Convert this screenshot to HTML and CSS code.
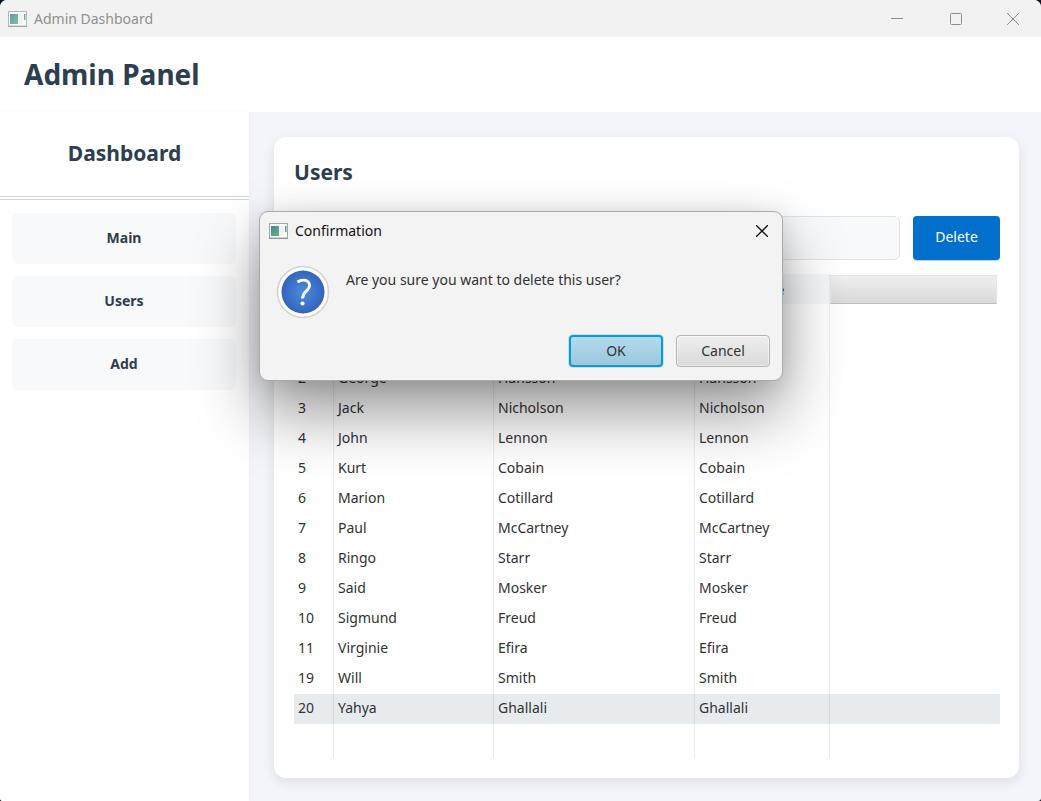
FILE: index.html
```html
<!DOCTYPE html>
<html lang="en">
<head>
<meta charset="utf-8">
<title>Admin Dashboard</title>
<link rel="stylesheet" href="styles.css">
</head>
<body>
<svg width="0" height="0" class="defs" aria-hidden="true">
  <defs>
    <linearGradient id="pane" x1="0" y1="0" x2="1" y2="1"><stop offset="0" stop-color="#4a7fa8"/><stop offset="1" stop-color="#5fb87c"/></linearGradient>
    <symbol id="app-icon" viewBox="0 0 19 16">
      <rect x="0.5" y="0.5" width="18" height="14.500" fill="#fff" stroke="#a3a8b0"/>
      <path d="M0 15.500H19" stroke="#8f949c"/>
      <rect x="2" y="3" width="8" height="10" fill="url(#pane)"/>
      <rect x="11" y="3" width="4" height="10" fill="#f0f1f2"/>
      <rect x="16" y="3" width="1.500" height="6" fill="url(#pane)"/>
    </symbol>
  </defs>
</svg>
<div class="window">
  <div class="titlebar">
    <svg class="app-icon muted" width="19" height="16" aria-hidden="true"><use href="#app-icon"/></svg>
    <span class="titlebar-text">Admin Dashboard</span>
    <button class="caption" aria-label="Minimize"><svg width="12" height="12"><path d="M0 5.500H12"/></svg></button>
    <button class="caption" aria-label="Maximize"><svg width="12" height="12"><rect x=".5" y=".5" width="11" height="11" rx="1"/></svg></button>
    <button class="caption" aria-label="Close"><svg width="12" height="12"><path d="M0 0L12 12M12 0L0 12"/></svg></button>
  </div>
  <header class="header"><h1>Admin Panel</h1></header>
  <div class="body">
    <aside class="sidebar">
      <h2 class="sidebar-title">Dashboard</h2>
      <nav class="nav">
        <button>Main</button>
        <button>Users</button>
        <button>Add</button>
      </nav>
    </aside>
    <main class="main">
      <section class="card">
        <h2>Users</h2>
        <div class="toolbar">
          <input class="search" type="text" aria-label="Search users">
          <button class="delete">Delete</button>
        </div>
        <table class="users">
          <colgroup><col class="c-id"><col class="c-first"><col class="c-last"><col class="c-name"><col></colgroup>
          <thead><tr><th></th><th></th><th></th><th>Name</th><th class="rest"><div></div></th></tr></thead>
          <tbody>
            <tr><td></td><td></td><td></td><td></td><td></td></tr>
            <tr><td></td><td></td><td></td><td></td><td></td></tr>
            <tr><td>2</td><td>George</td><td>Hansson</td><td>Hansson</td><td></td></tr>
            <tr><td>3</td><td>Jack</td><td>Nicholson</td><td>Nicholson</td><td></td></tr>
            <tr><td>4</td><td>John</td><td>Lennon</td><td>Lennon</td><td></td></tr>
            <tr><td>5</td><td>Kurt</td><td>Cobain</td><td>Cobain</td><td></td></tr>
            <tr><td>6</td><td>Marion</td><td>Cotillard</td><td>Cotillard</td><td></td></tr>
            <tr><td>7</td><td>Paul</td><td>McCartney</td><td>McCartney</td><td></td></tr>
            <tr><td>8</td><td>Ringo</td><td>Starr</td><td>Starr</td><td></td></tr>
            <tr><td>9</td><td>Said</td><td>Mosker</td><td>Mosker</td><td></td></tr>
            <tr><td>10</td><td>Sigmund</td><td>Freud</td><td>Freud</td><td></td></tr>
            <tr><td>11</td><td>Virginie</td><td>Efira</td><td>Efira</td><td></td></tr>
            <tr><td>19</td><td>Will</td><td>Smith</td><td>Smith</td><td></td></tr>
            <tr class="selected"><td>20</td><td>Yahya</td><td>Ghallali</td><td>Ghallali</td><td></td></tr>
            <tr class="filler"><td></td><td></td><td></td><td></td><td></td></tr>
          </tbody>
        </table>
      </section>
    </main>
  </div>
</div>
<dialog class="dialog" open aria-labelledby="dlg-title">
  <div class="dialog-bar">
    <svg class="app-icon" width="19" height="16" aria-hidden="true"><use href="#app-icon"/></svg>
    <span id="dlg-title">Confirmation</span>
    <button class="dialog-close" aria-label="Close"><svg width="12" height="12"><path d="M0 0L12 12M12 0L0 12"/></svg></button>
  </div>
  <div class="dialog-content">
    <svg class="question" width="54" height="54" viewBox="0 0 54 54" aria-hidden="true">
      <defs><radialGradient id="ball" cy=".5"><stop offset="0" stop-color="#4a8ddd"/><stop offset="1" stop-color="#3464bd"/></radialGradient></defs>
      <circle cx="27" cy="27" r="25.500" fill="#fff" stroke="#d2d2d2" stroke-width="1.500"/>
      <circle cx="27" cy="27" r="21.500" fill="url(#ball)"/>
      <path d="M21.500 17C26 13.800 33.500 14.500 33.500 20.500C33.500 26 26.500 26.500 26.500 33.500" fill="none" stroke="#fff" stroke-width="2.800"/>
      <circle cx="26.500" cy="38.500" r="2.100" fill="#fff"/>
    </svg>
    <p>Are you sure you want to delete this user?</p>
  </div>
  <div class="dialog-actions">
    <button class="btn btn-default">OK</button>
    <button class="btn">Cancel</button>
  </div>
</dialog>
</body>
</html>
```

FILE: styles.css
```css
* { box-sizing: border-box; }
html { background: #0b1230; }
body {
  margin: 0;
  font: 14px/20px "Noto Sans", "Open Sans", sans-serif;
  color: #323232;
}
button, input { font: inherit; color: inherit; }
h1, h2, p { margin: 0; }
.defs { position: absolute; }

.window {
  display: flex;
  flex-direction: column;
  min-height: 100vh;
  border-radius: 7px 7px 3px 3px;
  overflow: hidden;
  background: #f4f5fa;
}
.titlebar {
  display: flex;
  align-items: center;
  height: 37px;
  padding-left: 8px;
  background: #f2f2f2;
  color: #8f8f8f;
}
.titlebar-text { flex: 1; padding-left: 7px; }
.muted { opacity: .8; }
.caption {
  display: flex;
  align-items: center;
  justify-content: center;
  width: 59px;
  height: 36px;
  padding: 0;
  border: 0;
  background: none;
}
.caption:last-child { width: 56px; }
.caption svg { fill: none; stroke: #8c8c8c; }

.header {
  display: flex;
  align-items: center;
  height: 75px;
  padding: 0 24px 2px;
  background: #fff;
  color: #2c3e50;
}
.header h1 { font-size: 28px; line-height: 38px; }
.body { flex: 1; display: flex; }

.sidebar {
  width: 249px;
  background: #fff;
  box-shadow: 0 0 5px rgba(0, 0, 0, .04);
  color: #2c3e50;
}
.sidebar-title {
  height: 88px;
  padding-top: 26px;
  border-bottom: 4px double #d3d6d8;
  font-size: 21px;
  line-height: 30px;
  text-align: center;
}
.nav {
  display: flex;
  flex-direction: column;
  gap: 12px;
  padding: 13px 13px 12px 12px;
}
.nav button {
  height: 51px;
  padding: 0 0 2px;
  border: 0;
  border-radius: 6px;
  background: #f8f9fb;
  font-weight: bold;
}

.main { flex: 1; display: flex; padding: 25px 22px 23px 25px; }
.card {
  flex: 1;
  padding: 20px 19px 20px 20px;
  border-radius: 12px;
  background: #fff;
  box-shadow: 0 4px 12px rgba(30, 30, 60, .1);
}
.card h2 { font-size: 21px; line-height: 30px; color: #2c3e50; }
.toolbar { display: flex; gap: 13px; margin-top: 29px; }
.search {
  flex: 1;
  min-width: 0;
  height: 44px;
  padding: 0 12px;
  border: 1px solid #dfe3e8;
  border-radius: 6px;
  background: #f8f9fb;
}
.delete {
  width: 87px;
  height: 44px;
  padding: 0 0 2px;
  border: 0;
  border-radius: 4px;
  background: #0070cc;
  box-shadow: 0 1px #b5d4ee;
  color: #fff;
}

.users {
  width: 100%;
  margin-top: 14px;
  border-spacing: 0;
  table-layout: fixed;
}
.c-id { width: 40px; }
.c-first { width: 160px; }
.c-last { width: 201px; }
.c-name { width: 135px; }
.users th, .users td { height: 30px; padding: 0 4px 2px; border-right: 1px solid #ececec; }
.users td { text-align: left; }
.users th { padding: 0; background: #f5f7f9; color: #1d3f73; font-size: 15px; }
.users th.rest { padding: 1px 3px 0 0; border: 0; background: none; }
.rest div {
  height: 29px;
  border: 1px solid #e6e6e6;
  border-bottom-color: #bfbfbf;
  background: linear-gradient(#efefef, #d9d9d9);
}
.users td:last-child { border-right: 0; }
.users .selected td { background: #e8ebee; border-color: #d7dadd; }
.users .filler td { height: 34px; }

.dialog {
  position: absolute;
  top: 211px;
  left: 1px;
  right: 0;
  width: 524px;
  margin: 0 auto;
  padding: 0;
  border: 1px solid #a9a9a9;
  border-radius: 9px;
  background: #f3f3f3;
  box-shadow: 0 32px 64px rgba(0, 0, 0, .4), 0 4px 24px rgba(0, 0, 0, .12);
  color: #323232;
}
.dialog-bar {
  display: flex;
  align-items: center;
  height: 37px;
  padding: 0 5px 0 9px;
  color: #111;
}
.dialog-bar span { flex: 1; padding-left: 7px; }
.dialog-close {
  display: flex;
  align-items: center;
  justify-content: center;
  width: 30px;
  height: 30px;
  padding: 0;
  border: 0;
  background: none;
}
.dialog-close svg { fill: none; stroke: #111; stroke-width: 1.3; }
.dialog-content { display: flex; gap: 16px; padding: 16px 16px 0; }
.dialog-content p { padding-top: 5px; }
.dialog-actions {
  display: flex;
  justify-content: flex-end;
  gap: 13px;
  padding: 16px 12px 13px;
}
.btn {
  width: 94px;
  height: 32px;
  padding: 0;
  border: 1px solid #b4b4b4;
  border-radius: 4px;
  background: linear-gradient(#efefef, #d9d9d9);
  box-shadow: inset 0 0 0 1px rgba(255, 255, 255, .5);
}
.btn-default {
  border: 2px solid #0a9bd6;
  background: linear-gradient(#b3dbee, #9bc6dc);
  box-shadow: 0 0 0 1px #bfe4f3;
}
```
